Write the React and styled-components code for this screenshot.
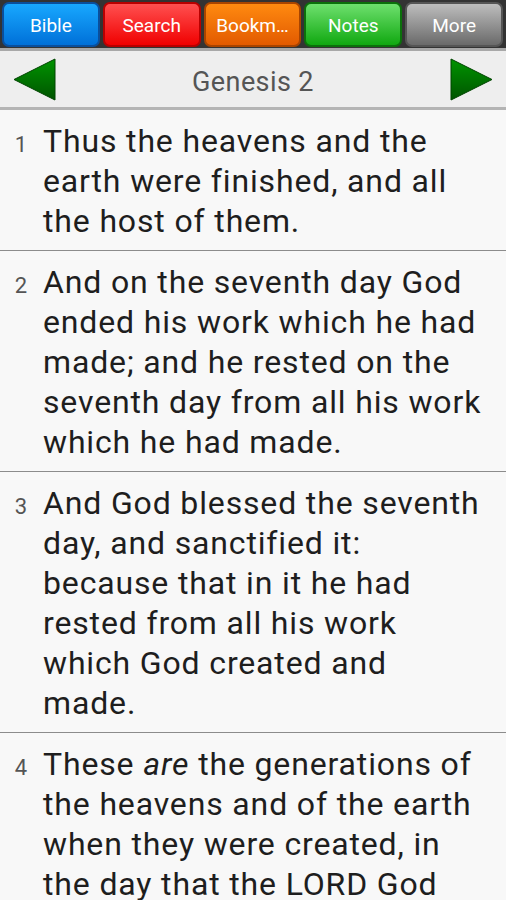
import React from "react";
import styled, { createGlobalStyle } from "styled-components";

const Global = createGlobalStyle`
  html, body {
    margin: 0;
    padding: 0;
    background: #f8f8f8;
    font-family: Roboto, "Noto Sans", sans-serif;
  }
`;

const Screen = styled.div`
  width: 506px;
  height: 900px;
  overflow: hidden;
  background: #f8f8f8;
`;

const TabBar = styled.div`
  display: flex;
  gap: 3px;
  padding: 2px 3px 1px 2px;
  background: #333;
  height: 45px;
`;

const TAB_COLORS = {
  blue: ["#18a8ff", "#0070d8", "#0a4f9c"],
  red: ["#ff5050", "#f00000", "#b80000"],
  orange: ["#ff8a10", "#e25a00", "#a84400"],
  green: ["#6ee06e", "#10a810", "#0b700b"],
  gray: ["#bdbdbd", "#6a6a6a", "#555"],
};

const Tab = styled.button`
  flex: 1;
  border-radius: 7px;
  border: 2px solid ${({ $c }) => TAB_COLORS[$c][2]};
  background: linear-gradient(${({ $c }) => TAB_COLORS[$c][0]}, ${({ $c }) => TAB_COLORS[$c][1]});
  color: #fff;
  font-family: Roboto, sans-serif;
  font-size: 19px;
  padding: 2px 0 0;
  white-space: nowrap;
  overflow: hidden;
`;

const NavBar = styled.div`
  display: flex;
  align-items: center;
  justify-content: space-between;
  height: 56px;
  padding: 0 13px;
  background: #eeeeee;
  border-top: 3px solid #a8a8a8;
  border-bottom: 3px solid #b4b4b4;
`;

const Title = styled.div`
  font-size: 27px;
  letter-spacing: 0.4px;
  padding-top: 5px;
  color: #555;
`;

const Arrow = ({ dir }) => (
  <svg width="43" height="43" viewBox="0 0 43 43">
    <defs>
      <linearGradient id={`g${dir}`} x1="0" y1="0" x2="0" y2="1">
        <stop offset="0" stopColor="#009400" />
        <stop offset="1" stopColor="#005400" />
      </linearGradient>
    </defs>
    <polygon
      points={dir === "left" ? "42,1 1,21.5 42,42" : "1,1 42,21.5 1,42"}
      fill={`url(#g${dir})`}
      stroke="#004400"
      strokeWidth="1"
    />
  </svg>
);

const Verse = styled.div`
  display: flex;
  align-items: baseline;
  padding: 11px 4px 9px 0;
  border-bottom: 1px solid #8c8c8c;
`;

const Num = styled.div`
  width: 43px;
  flex-shrink: 0;
  padding-right: 16px;
  box-sizing: border-box;
  text-align: right;
  font-size: 22px;
  color: #555;
`;

const Text = styled.div`
  font-size: 32px;
  line-height: 40px;
  color: #1e1e1e;
  letter-spacing: 0.85px;
`;

const Line = styled.div`
  white-space: nowrap;
`;

const VERSES = [
  ["1", ["Thus the heavens and the", "earth were finished, and all", "the host of them."]],
  ["2", [
    "And on the seventh day God",
    "ended his work which he had",
    "made; and he rested on the",
    "seventh day from all his work",
    "which he had made.",
  ]],
  ["3", [
    "And God blessed the seventh",
    "day, and sanctified it:",
    "because that in it he had",
    "rested from all his work",
    "which God created and",
    "made.",
  ]],
  ["4", [
    <>These <i>are</i> the generations of</>,
    "the heavens and of the earth",
    "when they were created, in",
    "the day that the LORD God",
    "made the earth and the",
    "heavens,",
  ]],
];

export default function App() {
  return (
    <Screen>
      <Global />
      <TabBar>
        <Tab $c="blue">Bible</Tab>
        <Tab $c="red">Search</Tab>
        <Tab $c="orange">Bookm…</Tab>
        <Tab $c="green">Notes</Tab>
        <Tab $c="gray">More</Tab>
      </TabBar>
      <NavBar>
        <Arrow dir="left" />
        <Title>Genesis 2</Title>
        <Arrow dir="right" />
      </NavBar>
      {VERSES.map(([n, lines]) => (
        <Verse key={n}>
          <Num>{n}</Num>
          <Text>
            {lines.map((l, i) => (
              <Line key={i}>{l}</Line>
            ))}
          </Text>
        </Verse>
      ))}
    </Screen>
  );
}
